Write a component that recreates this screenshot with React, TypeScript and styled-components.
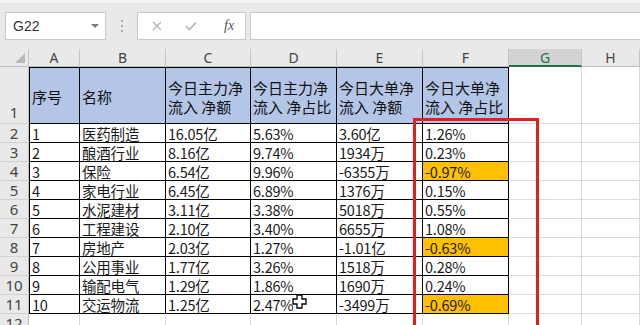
import { Fragment } from 'react';
import styled, { createGlobalStyle } from 'styled-components';

const GlobalStyle = createGlobalStyle`
  html, body {
    margin: 0;
    padding: 0;
    background: #fff;
    overflow: hidden;
  }
`;

const Page = styled.div`
  position: relative;
  width: 640px;
  height: 325px;
  overflow: hidden;
  background: #fff;
  font-family: "Noto Sans CJK SC", "Noto Sans", sans-serif;
`;

const FormulaBar = styled.div`
  height: 50px;
  box-sizing: border-box;
  background: #e9e9e9;
  border-top: 3px solid #f3f3f3;
  padding: 9px 0 0 5px;
  display: flex;
  align-items: flex-start;
`;

const NameBox = styled.div`
  width: 101px;
  height: 28px;
  box-sizing: border-box;
  background: #fff;
  border: 1px solid #c9c9c9;
  display: flex;
  align-items: center;
  justify-content: space-between;
  padding: 0 6px 0 7px;
  font-family: "Liberation Sans", sans-serif;
  font-size: 14px;
  color: #333;
`;

const DropArrow = styled.span`
  width: 0;
  height: 0;
  border-left: 4px solid transparent;
  border-right: 4px solid transparent;
  border-top: 4px solid #7a7a7a;
`;

const Grip = styled.div`
  width: 31px;
  height: 28px;
  display: flex;
  flex-direction: column;
  align-items: center;
  justify-content: center;
  gap: 3px;
`;

const GripDot = styled.span`
  width: 2px;
  height: 2px;
  background: #a8a8a8;
`;

const FxBox = styled.div`
  width: 109px;
  height: 28px;
  box-sizing: border-box;
  background: #fff;
  border: 1px solid #c9c9c9;
  display: flex;
  align-items: center;
  padding: 0 10px 0 14px;
  gap: 23px;
`;

const FxLabel = styled.span`
  font-family: "Liberation Serif", serif;
  font-style: italic;
  font-size: 14px;
  color: #555;
  margin-left: 4px;
`;

const FormulaInput = styled.div`
  flex: 1;
  height: 28px;
  margin-left: 4px;
  box-sizing: border-box;
  background: #fff;
  border: 1px solid #c9c9c9;
  border-right: none;
`;

const Sheet = styled.div`
  display: grid;
  grid-template-columns: 29px 51px 86px 85px 86px 86px 86px 73px 1fr;
  grid-template-rows: 18px 57px repeat(11, 19px);
  margin-top: -1px;
`;

const Corner = styled.div`
  position: relative;
  background: #e9e9e9;
  border-right: 1px solid #c4c4c4;
  border-bottom: 1px solid #bdbdbd;
  &::after {
    content: '';
    position: absolute;
    right: 3px;
    bottom: 3px;
    border-left: 10px solid transparent;
    border-bottom: 10px solid #b9b9b9;
  }
`;

const ColHead = styled.div<{ $active?: boolean }>`
  box-sizing: border-box;
  background: ${(p) => (p.$active ? '#d3d3d3' : '#e9e9e9')};
  border-right: 1px solid #c4c4c4;
  border-bottom: ${(p) => (p.$active ? '2px solid #217346' : '1px solid #bdbdbd')};
  color: ${(p) => (p.$active ? '#217346' : '#444')};
  font-family: "Noto Sans", sans-serif;
  font-size: 14px;
  line-height: 18px;
  text-align: center;
`;

const RowHead = styled.div<{ $tall?: boolean }>`
  box-sizing: border-box;
  background: #e9e9e9;
  border-right: 1px solid #bdbdbd;
  border-bottom: 1px solid #d2d2d2;
  color: #444;
  font-family: "Noto Sans", sans-serif;
  font-size: 15px;
  line-height: 18px;
  display: flex;
  align-items: flex-end;
  justify-content: center;
  padding-bottom: ${(p) => (p.$tall ? '2px' : '0')};
`;

const HeadCell = styled.div<{ $first?: boolean }>`
  box-sizing: border-box;
  background: #b4c6e7;
  border-top: 1px solid #000;
  border-right: 1px solid #000;
  border-bottom: 1px solid #000;
  border-left: ${(p) => (p.$first ? '1px solid #000' : 'none')};
  padding: 2px 0 0 2px;
  display: flex;
  flex-direction: column;
  justify-content: center;
  font-size: 15px;
  line-height: 19px;
  color: #111;
  white-space: nowrap;
`;

const DataCell = styled.div<{ $first?: boolean; $hl?: boolean }>`
  box-sizing: border-box;
  background: ${(p) => (p.$hl ? '#ffc000' : '#fff')};
  border-right: 1px solid #000;
  border-bottom: 1px solid #000;
  border-left: ${(p) => (p.$first ? '1px solid #000' : 'none')};
  padding-left: 2px;
  font-size: 14.5px;
  line-height: 19px;
  color: #1a1a1a;
  white-space: nowrap;
  letter-spacing: -0.2px;
`;

const GridCell = styled.div`
  box-sizing: border-box;
  border-right: 1px solid #d9d9d9;
  border-bottom: 1px solid #d9d9d9;
`;

const RedFrame = styled.div`
  position: absolute;
  left: 413px;
  top: 118px;
  width: 126px;
  height: 230px;
  box-sizing: border-box;
  border: 3px solid #e0201e;
`;

const Cursor = styled.svg`
  position: absolute;
  left: 292px;
  top: 294px;
`;

const headers = [
  ['序号'],
  ['名称'],
  ['今日主力净', '流入 净额'],
  ['今日主力净', '流入 净占比'],
  ['今日大单净', '流入 净额'],
  ['今日大单净', '流入 净占比'],
];

const rows = [
  ['1', '医药制造', '16.05亿', '5.63%', '3.60亿', '1.26%'],
  ['2', '酿酒行业', '8.16亿', '9.74%', '1934万', '0.23%'],
  ['3', '保险', '6.54亿', '9.96%', '-6355万', '-0.97%'],
  ['4', '家电行业', '6.45亿', '6.89%', '1376万', '0.15%'],
  ['5', '水泥建材', '3.11亿', '3.38%', '5018万', '0.55%'],
  ['6', '工程建设', '2.10亿', '3.40%', '6655万', '1.08%'],
  ['7', '房地产', '2.03亿', '1.27%', '-1.01亿', '-0.63%'],
  ['8', '公用事业', '1.77亿', '3.26%', '1518万', '0.28%'],
  ['9', '输配电气', '1.29亿', '1.86%', '1690万', '0.24%'],
  ['10', '交运物流', '1.25亿', '2.47%', '-3499万', '-0.69%'],
];

const columns = ['A', 'B', 'C', 'D', 'E', 'F', 'G', 'H'];

function App() {
  return (
    <Page>
      <GlobalStyle />
      <FormulaBar>
        <NameBox>
          G22
          <DropArrow />
        </NameBox>
        <Grip>
          <GripDot />
          <GripDot />
          <GripDot />
        </Grip>
        <FxBox>
          <svg width="10" height="10" viewBox="0 0 10 10">
            <path d="M1 1 L9 9 M9 1 L1 9" stroke="#b5b5b5" strokeWidth="1.4" />
          </svg>
          <svg width="12" height="10" viewBox="0 0 12 10">
            <path d="M1 5 L4.5 8.5 L11 1.5" stroke="#b5b5b5" strokeWidth="1.6" fill="none" />
          </svg>
          <FxLabel>fx</FxLabel>
        </FxBox>
        <FormulaInput />
      </FormulaBar>

      <Sheet>
        <Corner />
        {columns.map((c) => (
          <ColHead key={c} $active={c === 'G'}>{c}</ColHead>
        ))}

        <RowHead $tall>1</RowHead>
        {headers.map((h, i) => (
          <HeadCell key={i} $first={i === 0}>
            {h.map((line) => (
              <span key={line}>{line}</span>
            ))}
          </HeadCell>
        ))}
        <GridCell />
        <GridCell />

        {rows.map((r, ri) => (
          <Fragment key={ri}>
            <RowHead>{ri + 2}</RowHead>
            {r.map((v, ci) => (
              <DataCell key={ci} $first={ci === 0} $hl={ci === 5 && v.startsWith('-')}>
                {v}
              </DataCell>
            ))}
            <GridCell />
            <GridCell />
          </Fragment>
        ))}

        <RowHead>12</RowHead>
        {columns.map((c) => (
          <GridCell key={c} />
        ))}
      </Sheet>

      <RedFrame />
      <Cursor width="15" height="15" viewBox="0 0 15 15">
        <path
          d="M5 1 H10 V5 H14 V10 H10 V14 H5 V10 H1 V5 H5 Z"
          fill="#fff"
          stroke="#000"
          strokeWidth="1.3"
        />
      </Cursor>
    </Page>
  );
}

export default App;
